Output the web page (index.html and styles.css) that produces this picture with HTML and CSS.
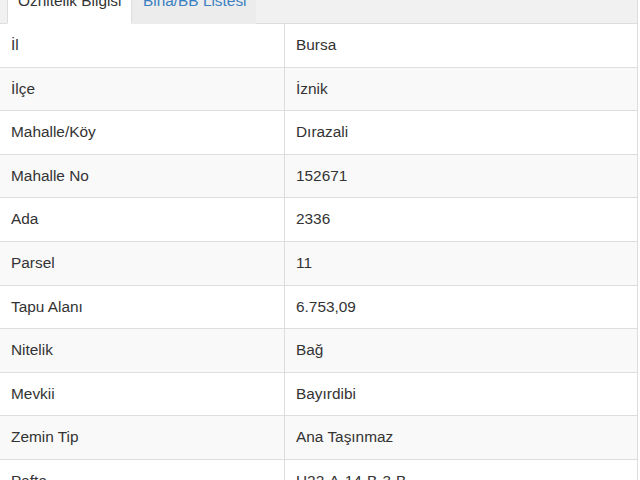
FILE: index.html
```html
<!DOCTYPE html>
<html lang="tr">
<head>
    <meta charset="UTF-8">
    <title>Öznitelik Bilgisi</title>
    <link rel="stylesheet" href="styles.css">
</head>
<body>
    <div class="panel">
        <ul class="tabs">
            <li class="tab active">Öznitelik Bilgisi</li>
            <li class="tab"><a href="#">Bina/BB Listesi</a></li>
        </ul>
        <table class="info-table">
            <tr><td>İl</td><td>Bursa</td></tr>
            <tr><td>İlçe</td><td>İznik</td></tr>
            <tr><td>Mahalle/Köy</td><td>Dırazali</td></tr>
            <tr><td>Mahalle No</td><td>152671</td></tr>
            <tr><td>Ada</td><td>2336</td></tr>
            <tr><td>Parsel</td><td>11</td></tr>
            <tr><td>Tapu Alanı</td><td>6.753,09</td></tr>
            <tr><td>Nitelik</td><td>Bağ</td></tr>
            <tr><td>Mevkii</td><td>Bayırdibi</td></tr>
            <tr><td>Zemin Tip</td><td>Ana Taşınmaz</td></tr>
            <tr><td>Pafta</td><td>H22-A-14-B-3-B</td></tr>
        </table>
    </div>
</body>
</html>
```

FILE: styles.css
```css
body {
    margin: 0;
    font-family: "Liberation Sans", Arial, sans-serif;
    font-size: 15.4px;
    color: #333;
    background: #fff;
    overflow: hidden;
}

.panel {
    width: 637px;
    margin-top: -17px;
    border-right: 1px solid #ddd;
}

.tabs {
    list-style: none;
    margin: 0;
    padding: 0 0 0 7px;
    display: flex;
    background: #f1f1f1;
    border-bottom: 1px solid #ddd;
}

.tab {
    flex-shrink: 0;
    white-space: nowrap;
    padding: 7px 10px 12px 10px;
    line-height: 20px;
    margin-bottom: -1px;
    border: 1px solid transparent;
    border-bottom: none;
}

.tab.active {
    background: #fff;
    border-color: #ddd;
    width: 103px;
    border-bottom: 1px solid #fff;
}

.tab a {
    color: #3a7fc1;
    text-decoration: none;
}

.tab:not(.active) {
    background: #ececec;
    width: 102px;
}

.info-table {
    width: 100%;
    border-collapse: collapse;
}

.info-table td {
    padding: 11px 10px 11px 11px;
    line-height: 20.6px;
    border-top: 1px solid #ddd;
}

.info-table td:first-child {
    width: 263px;
    border-right: 1px solid #ddd;
}

.info-table tr:nth-child(even) td {
    background: #f9f9f9;
}

.info-table tr:first-child td {
    border-top: none;
}
```
